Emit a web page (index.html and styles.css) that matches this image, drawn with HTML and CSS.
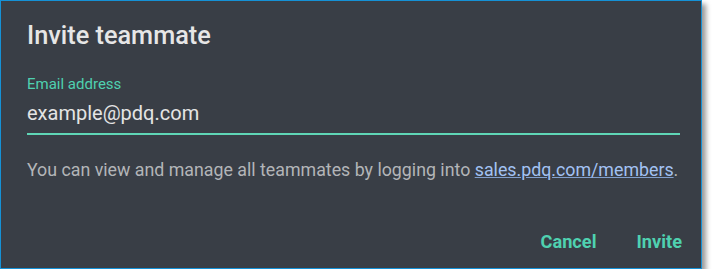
FILE: index.html
```html
<!DOCTYPE html>
<html lang="en">
<head>
    <meta charset="UTF-8">
    <meta name="viewport" content="width=device-width, initial-scale=1.0">
    <title>Invite teammate</title>
    <link rel="stylesheet" href="styles.css">
</head>
<body>
    <div class="dialog">
        <h2 class="dialog-title">Invite teammate</h2>
        <div class="field">
            <label for="email">Email address</label>
            <input type="email" id="email" value="example@pdq.com">
        </div>
        <p class="hint">You can view and manage all teammates by logging into <a href="#">sales.pdq.com/members</a>.</p>
        <div class="actions">
            <button class="btn">Cancel</button>
            <button class="btn">Invite</button>
        </div>
    </div>
</body>
</html>
```

FILE: styles.css
```css
body {
    margin: 0;
    background: #fff;
    font-family: Roboto, Arial, sans-serif;
}

.dialog {
    width: 702px;
    height: 269px;
    box-sizing: border-box;
    background: #393e46;
    border: 1px solid #1591d6;
    box-shadow: 4px 4px 5px rgba(0, 0, 0, 0.4);
    padding: 0 19px 0 26px;
    display: flex;
    flex-direction: column;
}

.dialog-title {
    margin: 20px 0 0;
    font-size: 25.3px;
    font-weight: 500;
    color: #e6e6e6;
    line-height: 30px;
}

.field {
    margin-top: 24px;
    margin-right: 2px;
}

label {
    display: block;
    font-size: 15px;
    color: #4fd1b0;
    line-height: 18px;
}

input {
    display: block;
    width: 100%;
    box-sizing: border-box;
    background: transparent;
    border: none;
    border-bottom: 2px solid #5fd6b6;
    color: #e4e4e4;
    font-family: inherit;
    font-size: 20px;
    line-height: 24px;
    height: 42px;
    padding: 8px 0;
    outline: none;
}

.hint {
    margin: 24px 0 0;
    font-size: 17.8px;
    color: #b3b5b8;
    line-height: 22px;
}

.hint a {
    color: #a3c2f3;
    text-decoration-color: #819fcc;
}

.actions {
    margin-top: auto;
    margin-bottom: 15px;
    display: flex;
    justify-content: flex-end;
    gap: 40px;
}

.btn {
    background: none;
    border: none;
    padding: 0;
    font-family: inherit;
    font-size: 18.2px;
    line-height: 22px;
    font-weight: 700;
    color: #4fd1b0;
    cursor: pointer;
}
```
